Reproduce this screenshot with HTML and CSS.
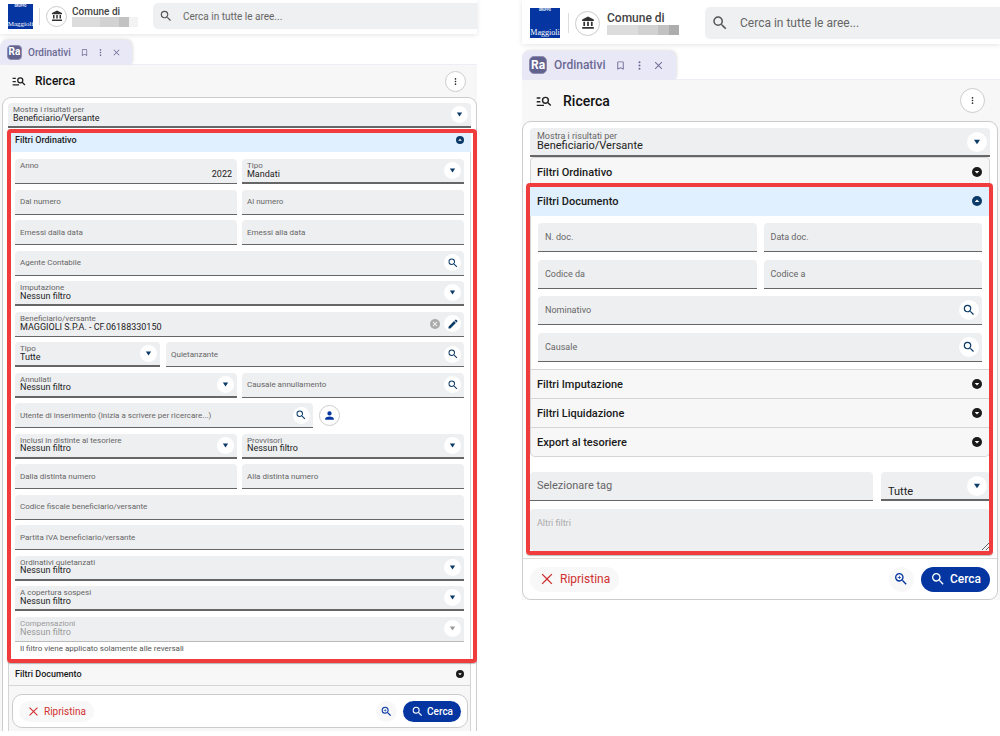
FILE: index.html
```html
<!DOCTYPE html>
<html lang="it">
<head>
<meta charset="utf-8">
<meta name="viewport" content="width=device-width, initial-scale=1">
<title>Ordinativi - Ricerca</title>
<link rel="stylesheet" href="styles.css">
</head>
<body>
<svg class="sprite" aria-hidden="true">
  <symbol id="search" viewBox="0 0 24 24"><path d="M15.5 14h-.79l-.28-.27A6.47 6.47 0 0 0 16 9.5 6.5 6.5 0 1 0 9.5 16c1.61 0 3.09-.59 4.23-1.57l.27.28v.79l5 4.99L20.49 19l-4.99-5zm-6 0C7.01 14 5 11.99 5 9.5S7.01 5 9.5 5 14 7.01 14 9.5 11.99 14 9.5 14z"/></symbol>
  <symbol id="zoom-in" viewBox="0 0 24 24"><path d="M15.5 14h-.79l-.28-.27A6.47 6.47 0 0 0 16 9.5 6.5 6.5 0 1 0 9.5 16c1.61 0 3.09-.59 4.23-1.57l.27.28v.79l5 4.99L20.49 19l-4.99-5zm-6 0C7.01 14 5 11.99 5 9.5S7.01 5 9.5 5 14 7.01 14 9.5 11.99 14 9.5 14zM12 10h-2v2H9v-2H7V9h2V7h1v2h2v1z"/></symbol>
  <symbol id="manage" viewBox="1 3 22 18"><path d="M7 9H2V7h5v2zm0 3H2v2h5v-2zm13.59 7-3.83-3.83A4.92 4.92 0 0 1 14 16a5 5 0 1 1 5-5c0 1.020-.31 1.960-.83 2.750L22 17.590 20.590 19zM17 11a3 3 0 1 0-6 0 3 3 0 0 0 6 0zM2 19h10v-2H2v2z"/></symbol>
  <symbol id="bank" viewBox="0 0 24 24"><path d="M4 10v7h3v-7H4zm6.500 0v7h3v-7h-3zM2 22h20v-3H2v3zm15-12v7h3v-7h-3zM12 1 2 6v2.500h20V6L12 1z"/></symbol>
  <symbol id="bookmark" viewBox="0 0 24 24"><path d="M17 3H7a2 2 0 0 0-2 2v16l7-3 7 3V5a2 2 0 0 0-2-2zm0 15-5-2.180L7 18V5h10v13z"/></symbol>
  <symbol id="more" viewBox="0 0 24 24"><circle cx="12" cy="5" r="2.200"/><circle cx="12" cy="12" r="2.200"/><circle cx="12" cy="19" r="2.200"/></symbol>
  <symbol id="close" viewBox="0 0 24 24"><path d="M20 5.400 18.600 4 12 10.600 5.400 4 4 5.400 10.600 12 4 18.600 5.400 20 12 13.400 18.600 20 20 18.600 13.400 12z"/></symbol>
  <symbol id="arrow" viewBox="0 0 24 24"><path d="M3 5h18l-9 14z"/></symbol>
  <symbol id="open" viewBox="0 0 24 24"><circle cx="12" cy="12" r="12"/><path d="M6.500 9.500h11L12 15.500z" fill="#fff"/></symbol>
  <symbol id="shut" viewBox="0 0 24 24"><circle cx="12" cy="12" r="12"/><path d="M6.500 14.500h11L12 8.500z" fill="#fff"/></symbol>
  <symbol id="clear" viewBox="0 0 24 24"><circle cx="12" cy="12" r="12"/><path d="m7 7 10 10M17 7 7 17" stroke="#eeeff1" stroke-width="2.500"/></symbol>
  <symbol id="edit" viewBox="0 0 24 24"><path d="M3 17.250V21h3.750L17.810 9.940l-3.750-3.750L3 17.250zM20.710 7.040a1 1 0 0 0 0-1.410l-2.340-2.340a1 1 0 0 0-1.410 0l-1.830 1.830 3.750 3.750 1.830-1.830z"/></symbol>
  <symbol id="person" viewBox="0 0 24 24"><path d="M12 12a4 4 0 1 0 0-8 4 4 0 0 0 0 8zm0 2c-2.670 0-8 1.340-8 4v2h16v-2c0-2.660-5.330-4-8-4z"/></symbol>
</svg>

<main class="screens">
  <section class="panel compact">
    <header class="top">
      <span class="logo"><small>GRUPPO</small><b>Maggioli</b></span>
      <span class="divider"></span>
      <span class="round bank"><svg><use href="#bank"/></svg></span>
      <div class="entity"><span>Comune di</span><span class="masked"><i></i><i></i><i></i><i></i></span></div>
      <label class="global"><svg><use href="#search"/></svg><input type="search" aria-label="Cerca" placeholder="Cerca in tutte le aree..."></label>
    </header>
    <nav class="tabs">
      <div class="tab">
        <span class="ra">Ra</span><a href="#ordinativi">Ordinativi</a>
        <button type="button" aria-label="Segnalibro"><svg><use href="#bookmark"/></svg></button>
        <button type="button" aria-label="Menu scheda"><svg><use href="#more"/></svg></button>
        <button type="button" aria-label="Chiudi"><svg><use href="#close"/></svg></button>
      </div>
    </nav>
    <div class="content">
      <div class="heading">
        <svg class="manage"><use href="#manage"/></svg><h1>Ricerca</h1>
        <button class="round" type="button" aria-label="Altre azioni"><svg><use href="#more"/></svg></button>
      </div>
      <form class="card">
        <div class="field pick"><label for="a0">Mostra i risultati per</label><select id="a0"><option>Beneficiario/Versante</option></select><span class="knob"><svg><use href="#arrow"/></svg></span></div>
        <div class="accordion">
          <div class="marked">
            <button class="bar active" type="button" aria-expanded="true">Filtri Ordinativo<svg><use href="#shut"/></svg></button>
            <div class="body">
              <div class="rows">
                <div class="pair">
                  <div class="field number"><label for="a1">Anno</label><input id="a1" value="2022"></div>
                  <div class="field pick"><label for="a2">Tipo</label><select id="a2"><option>Mandati</option></select><span class="knob"><svg><use href="#arrow"/></svg></span></div>
                </div>
                <div class="pair">
                  <div class="field empty"><label for="a3">Dal numero</label><input id="a3"></div>
                  <div class="field empty"><label for="a4">Al numero</label><input id="a4"></div>
                </div>
                <div class="pair">
                  <div class="field empty"><label for="a5">Emessi dalla data</label><input id="a5"></div>
                  <div class="field empty"><label for="a6">Emessi alla data</label><input id="a6"></div>
                </div>
                <div class="field empty"><label for="a7">Agente Contabile</label><input id="a7"><button class="knob" type="button" aria-label="Cerca agente"><svg><use href="#search"/></svg></button></div>
                <div class="field pick"><label for="a8">Imputazione</label><select id="a8"><option>Nessun filtro</option></select><span class="knob"><svg><use href="#arrow"/></svg></span></div>
                <div class="field"><label for="a9">Beneficiario/versante</label><input id="a9" value="MAGGIOLI S.P.A. - CF.06188330150">
                  <span class="tools"><button class="clear" type="button" aria-label="Cancella"><svg><use href="#clear"/></svg></button><button class="knob" type="button" aria-label="Modifica"><svg><use href="#edit"/></svg></button></span></div>
                <div class="pair third">
                  <div class="field pick"><label for="a10">Tipo</label><select id="a10"><option>Tutte</option></select><span class="knob"><svg><use href="#arrow"/></svg></span></div>
                  <div class="field empty"><label for="a11">Quietanzante</label><input id="a11"><button class="knob" type="button" aria-label="Cerca quietanzante"><svg><use href="#search"/></svg></button></div>
                </div>
                <div class="pair">
                  <div class="field pick"><label for="a12">Annullati</label><select id="a12"><option>Nessun filtro</option></select><span class="knob"><svg><use href="#arrow"/></svg></span></div>
                  <div class="field empty"><label for="a13">Causale annullamento</label><input id="a13"><button class="knob" type="button" aria-label="Cerca causale"><svg><use href="#search"/></svg></button></div>
                </div>
                <div class="pair user">
                  <div class="field empty"><label for="a14">Utente di inserimento (Inizia a scrivere per ricercare...)</label><input id="a14"><button class="knob" type="button" aria-label="Cerca utente"><svg><use href="#search"/></svg></button></div>
                  <button class="round person" type="button" aria-label="Utente corrente"><svg><use href="#person"/></svg></button>
                </div>
                <div class="pair">
                  <div class="field pick"><label for="a15">Inclusi in distinte al tesoriere</label><select id="a15"><option>Nessun filtro</option></select><span class="knob"><svg><use href="#arrow"/></svg></span></div>
                  <div class="field pick"><label for="a16">Provvisori</label><select id="a16"><option>Nessun filtro</option></select><span class="knob"><svg><use href="#arrow"/></svg></span></div>
                </div>
                <div class="pair">
                  <div class="field empty"><label for="a17">Dalla distinta numero</label><input id="a17"></div>
                  <div class="field empty"><label for="a18">Alla distinta numero</label><input id="a18"></div>
                </div>
                <div class="field empty"><label for="a19">Codice fiscale beneficiario/versante</label><input id="a19"></div>
                <div class="field empty"><label for="a20">Partita IVA beneficiario/versante</label><input id="a20"></div>
                <div class="field pick"><label for="a21">Ordinativi quietanzati</label><select id="a21"><option>Nessun filtro</option></select><span class="knob"><svg><use href="#arrow"/></svg></span></div>
                <div class="field pick"><label for="a22">A copertura sospesi</label><select id="a22"><option>Nessun filtro</option></select><span class="knob"><svg><use href="#arrow"/></svg></span></div>
                <div class="field pick off"><label for="a23">Compensazioni</label><select id="a23" disabled><option>Nessun filtro</option></select><span class="knob"><svg><use href="#arrow"/></svg></span></div>
              </div>
              <p class="hint">Il filtro viene applicato solamente alle reversali</p>
            </div>
          </div>
          <button class="bar" type="button" aria-expanded="false">Filtri Documento<svg><use href="#open"/></svg></button>
          <div class="underlay">
            <div class="actions">
              <button class="reset" type="button"><svg><use href="#close"/></svg>Ripristina</button>
              <button class="zoom" type="button" aria-label="Ricerca avanzata"><svg><use href="#zoom-in"/></svg></button>
              <button class="submit" type="button"><svg><use href="#search"/></svg>Cerca</button>
            </div>
          </div>
        </div>
      </form>
    </div>
  </section>

  <section class="panel roomy">
    <header class="top">
      <span class="logo"><small>GRUPPO</small><b>Maggioli</b></span>
      <span class="divider"></span>
      <span class="round bank"><svg><use href="#bank"/></svg></span>
      <div class="entity"><span>Comune di</span><span class="masked"><i></i><i></i><i></i><i></i></span></div>
      <label class="global"><svg><use href="#search"/></svg><input type="search" aria-label="Cerca" placeholder="Cerca in tutte le aree..."></label>
    </header>
    <nav class="tabs">
      <div class="tab">
        <span class="ra">Ra</span><a href="#ordinativi">Ordinativi</a>
        <button type="button" aria-label="Segnalibro"><svg><use href="#bookmark"/></svg></button>
        <button type="button" aria-label="Menu scheda"><svg><use href="#more"/></svg></button>
        <button type="button" aria-label="Chiudi"><svg><use href="#close"/></svg></button>
      </div>
    </nav>
    <div class="content">
      <div class="heading">
        <svg class="manage"><use href="#manage"/></svg><h1>Ricerca</h1>
        <button class="round" type="button" aria-label="Altre azioni"><svg><use href="#more"/></svg></button>
      </div>
      <form class="card">
        <div class="field pick"><label for="b0">Mostra i risultati per</label><select id="b0"><option>Beneficiario/Versante</option></select><span class="knob"><svg><use href="#arrow"/></svg></span></div>
        <div class="accordion">
          <button class="bar first" type="button" aria-expanded="false">Filtri Ordinativo<svg><use href="#open"/></svg></button>
          <div class="marked">
            <button class="bar active" type="button" aria-expanded="true">Filtri Documento<svg><use href="#shut"/></svg></button>
            <div class="body">
              <div class="rows">
                <div class="pair">
                  <div class="field empty"><label for="b1">N. doc.</label><input id="b1"></div>
                  <div class="field empty"><label for="b2">Data doc.</label><input id="b2"></div>
                </div>
                <div class="pair">
                  <div class="field empty"><label for="b3">Codice da</label><input id="b3"></div>
                  <div class="field empty"><label for="b4">Codice a</label><input id="b4"></div>
                </div>
                <div class="field empty"><label for="b5">Nominativo</label><input id="b5"><button class="knob" type="button" aria-label="Cerca nominativo"><svg><use href="#search"/></svg></button></div>
                <div class="field empty"><label for="b6">Causale</label><input id="b6"><button class="knob" type="button" aria-label="Cerca causale"><svg><use href="#search"/></svg></button></div>
              </div>
            </div>
            <button class="bar" type="button" aria-expanded="false">Filtri Imputazione<svg><use href="#open"/></svg></button>
            <button class="bar" type="button" aria-expanded="false">Filtri Liquidazione<svg><use href="#open"/></svg></button>
            <button class="bar last" type="button" aria-expanded="false">Export al tesoriere<svg><use href="#open"/></svg></button>
            <div class="tags">
              <div class="field empty big"><label for="b7">Selezionare tag</label><input id="b7"></div>
              <div class="field pick low"><select id="b8" aria-label="Tipo di tag"><option>Tutte</option></select><span class="knob"><svg><use href="#arrow"/></svg></span></div>
            </div>
            <textarea class="other" aria-label="Altri filtri" placeholder="Altri filtri"></textarea>
          </div>
        </div>
        <div class="actions">
          <button class="reset" type="button"><svg><use href="#close"/></svg>Ripristina</button>
          <button class="zoom" type="button" aria-label="Ricerca avanzata"><svg><use href="#zoom-in"/></svg></button>
          <button class="submit" type="button"><svg><use href="#search"/></svg>Cerca</button>
        </div>
      </form>
    </div>
  </section>
</main>
</body>
</html>
```

FILE: styles.css
```css
* { box-sizing: border-box; }
body { margin: 0; background: #fff; color: #222; font-family: Roboto, "Liberation Sans", sans-serif; }
button, input, select, textarea { font: inherit; color: inherit; margin: 0; padding: 0; border: 0; background: none; border-radius: 0; outline: 0; min-width: 0; }
button { cursor: pointer; }
svg { display: block; fill: currentColor; flex: none; }
.sprite { position: absolute; width: 0; height: 0; }

.screens { display: grid; grid-template-columns: minmax(0, 477fr) minmax(0, 478fr); gap: 45px; align-items: start; }

.compact {
  --label: 8px; --value: 9px; --bar: 9px; --title: 12px; --ui: 10px; --search: 10px;
  --field: 25px; --bar-h: 23px; --knob: 17px; --inset: 6px; --icon: 12px; --arrow: 7px;
  --pad: 5px; --label-top: 2px; --value-top: 6px; --round: 21px; --gap: 5px; --dot: 8px;
}
.roomy {
  --label: 9px; --value: 11px; --bar: 11px; --title: 14px; --ui: 12px; --search: 12px;
  --field: 29px; --bar-h: 29px; --knob: 20px; --inset: 7px; --icon: 14px; --arrow: 8px;
  --pad: 7px; --label-top: 2px; --value-top: 8px; --round: 25px; --gap: 7px; --dot: 10px;
}

/* Application header */
.top { display: flex; align-items: center; height: 34px; padding: 0 0 2px 8px; box-shadow: 0 1px 5px #0000001c; }
.roomy .top { height: 44px; padding: 2px 0 0 8px; }
.logo { display: flex; flex: none; flex-direction: column; align-items: center; justify-content: space-between; width: 25px; height: 25px; background: #0435a0; color: #fff; }
.logo small { font-size: 3px; font-weight: 700; line-height: 5px; }
.logo b { font-family: "Liberation Serif", serif; font-size: 7px; font-weight: 400; line-height: 9px; }
.roomy .logo { width: 30px; height: 30px; }
.roomy .logo b { font-size: 8px; line-height: 10px; }
.divider { width: 1px; height: 17px; margin: 0 6px; background: #ddd; }
.roomy .divider { height: 20px; margin: 0 6px 0 8px; }
.round { display: grid; place-items: center; flex: none; width: var(--round); height: var(--round); border: 1px solid #ccc; border-radius: 50%; background: #fff; }
.round svg { width: 9px; height: 9px; }
.bank svg { width: 12px; height: 12px; color: #333; }
.roomy .bank svg { width: 14px; height: 14px; }
.entity { display: flex; flex-direction: column; width: 66px; margin-left: 5px; font-size: var(--ui); font-weight: 500; line-height: 11px; color: #444; }
.roomy .entity { width: 72px; margin-left: 7px; line-height: 14px; }
.masked { display: grid; grid-template-columns: 3fr 2fr 1fr 1fr; height: 10px; }
.masked i:nth-child(1) { background: #dcdcdc; }
.masked i:nth-child(2) { background: #d2d2d2; }
.masked i:nth-child(3) { background: #c2c2c2; }
.masked i:nth-child(4) { background: #f3f3f3; }
.roomy .masked i:nth-child(4) { background: #adadad; }
.global { display: flex; align-items: center; flex: 1; height: 26px; margin-left: 15px; padding-left: 6px; gap: 10px; border-radius: 5px 0 0 5px; background: #eff0f1; color: #555; }
.roomy .global { height: 32px; margin-left: 26px; padding-left: 6px; gap: 11px; }
.global svg { width: 14px; height: 14px; }
.roomy .global svg { width: 18px; height: 18px; }
.global input { flex: 1; font-size: var(--search); }
.global input::placeholder { color: #666; opacity: 1; }

/* Tabs */
.tabs { display: flex; align-items: end; height: 30px; }
.roomy .tabs { height: 35px; }
.tab { display: flex; align-items: center; gap: 7px; height: 24px; padding: 0 11px 0 7px; border-radius: 7px 7px 0 0; background: #e9e8f6; color: #6b6a94; box-shadow: 1px -1px 3px #0000001f; }
.tab a { margin-right: 2px; color: inherit; font-size: var(--ui); font-weight: 500; text-decoration: none; }
.ra { display: grid; place-items: center; width: 15px; height: 15px; margin-right: -1px; border: 1px solid #8d8cb0; border-radius: 4px; background: #62628f; color: #fff; font-size: 10px; font-weight: 700; line-height: 12px; }
.roomy .ra { width: 18px; height: 18px; font-size: 12px; line-height: 15px; border-radius: 5px; }
.tab button svg { width: 9px; height: 9px; }
.roomy .tab { gap: 8px; height: 28px; padding-right: 12px; }
.roomy .tab button svg { width: 11px; height: 11px; }

/* Search panel */
.content { border-top: 1px solid #ededf7; background: #f7f7f7; padding: 0 0 0 2px; }
.roomy .content { padding: 0 2px 0 0; }
.heading { display: flex; align-items: center; height: 32px; padding: 0 11px 0 10px; }
.roomy .heading { height: 41px; padding: 0 13px 0 14px; }
.heading h1 { flex: 1; margin: 0 0 0 9px; font-size: var(--title); font-weight: 500; color: #111; }
.roomy .heading h1 { margin-left: 11px; }
.manage { width: 14px; height: 12px; }
.roomy .manage { width: 16px; height: 14px; }
.card { border: 1px solid #ccc; border-radius: 9px; background: #fff; }
.compact .card { padding: 5px 5px 0; border-bottom: 0; border-radius: 9px 9px 0 0; }
.roomy .card > .field, .roomy .accordion { margin: 0 7px; }
.roomy .card { padding-top: 6px; }

.field { display: grid; min-width: 0; height: var(--field); border-bottom: 1px solid #666; border-radius: 4px 4px 0 0; background: #eeeff1; }
.field > * { grid-area: 1 / 1; }
.field label { align-self: start; justify-self: start; z-index: 1; padding: var(--label-top) 0 0 var(--pad); font-size: var(--label); line-height: 9px; color: #666; white-space: nowrap; pointer-events: none; }
.roomy .field label { line-height: 12px; }
.field.empty label { align-self: center; padding-top: 0; }
.field.big label { font-size: 11px; }
.field input, .field select { width: 100%; height: 100%; padding: var(--value-top) var(--pad) 0; font-size: var(--value); appearance: none; }
.field.low select { padding-top: 11px; }
.field.pick { border-bottom: 2px solid #666; }
.number input { text-align: right; }
.knob { display: grid; place-items: center; align-self: center; justify-self: end; width: var(--knob); height: var(--knob); margin-right: 3px; border-radius: 50%; background: #fff; color: #0b3a66; }
.field .knob svg { width: var(--icon); height: var(--icon); }
.field.pick .knob { pointer-events: none; }
.field.pick .knob svg { width: var(--arrow); height: var(--arrow); }
.tools { display: flex; align-items: center; justify-self: end; gap: 4px; }
.clear { color: #aaa; }
.clear svg { width: 10px; height: 10px; }
.field.off { border-bottom: 1px solid #bbb; }
.field.off label, .field.off select, .field.off .knob { color: #999; opacity: 1; }

.accordion { margin-top: 1px; }
.bar { display: flex; align-items: center; justify-content: space-between; width: 100%; height: var(--bar-h); padding: 0 6px; border: 1px solid #d5d5d5; border-top: 0; background: #f7f7f7; font-size: var(--bar); font-weight: 500; color: #1a1a1a; }
.roomy .bar { padding: 0 7px 0 6px; }
.bar svg { width: var(--dot); height: var(--dot); }
.roomy .bar.first { height: 30px; border-top: 1px solid #d5d5d5; border-radius: 4px 4px 0 0; }
.bar.last { border-radius: 0 0 5px 5px; }
.bar.active { border-color: #e0f0ff; background: #e0f0ff; }
.bar.active svg { color: #0b3a66; }
.body { border: 1px solid #d5d5d5; border-top: 0; padding: 7px var(--inset); }
.compact .body { padding-bottom: 6px; }
.roomy .body { padding: 7px; }
.rows { display: flex; flex-direction: column; justify-content: space-between; min-height: 483px; }
.roomy .rows { min-height: 139px; }
.pair { display: grid; grid-template-columns: repeat(2, minmax(0, 1fr)); gap: var(--gap); }
.pair.third { grid-template-columns: minmax(0, 145fr) minmax(0, 298fr); gap: 6px; }
.pair.user { grid-template-columns: minmax(0, 297fr) minmax(0, 145fr); gap: 6px; align-items: center; }
.person { color: #0435a0; }
.person svg { width: 13px; height: 13px; }
.hint { margin: 0; padding: 2px 5px; font-size: var(--label); line-height: 10px; color: #555; }

/* Highlight frame drawn over the section */
.marked { position: relative; }
.marked::after { content: ""; position: absolute; inset: 0 -6px 0 -1px; border: 4px solid #f03c3c; border-radius: 4px; box-shadow: 0 1px 1px #0004; pointer-events: none; }
.roomy .marked::after { inset: -4px -3px -4px -4px; }

.tags { display: grid; grid-template-columns: minmax(0, 343fr) minmax(0, 109fr); gap: 8px; padding: 15px 0 8px; }
.other { display: block; width: 100%; height: 42px; padding: 8px 7px; border-radius: 4px; background: #eeeff1; font-size: var(--label); line-height: 12px; resize: vertical; }
.other::placeholder { color: #aaa; opacity: 1; }

/* Footer actions */
.actions { display: flex; align-items: center; background: #fff; }
.compact .actions { margin: 0 2px 0 3px; height: 34px; padding: 0 6px; border: 1px solid #ccc; border-radius: 10px; }
.underlay { padding: 8px 0 3px; border: 1px solid #d5d5d5; border-width: 0 1px; background: #f7f7f7; }
.roomy .actions { height: 41px; margin-top: 7px; padding: 0 7px; border-top: 1px solid #ddd; border-radius: 0 0 9px 9px; }
.actions button { display: flex; align-items: center; justify-content: center; height: 21px; border-radius: 13px; font-size: var(--ui); }
.roomy .actions button { height: 25px; }
.actions svg { width: 13px; height: 13px; }
.roomy .actions svg { width: 16px; height: 16px; }
.actions .reset { gap: 4px; margin-right: auto; padding: 0 8px; background: #f8f8f8; color: #d02f2f; }
.roomy .actions .reset { gap: 5px; padding: 0 9px; }
.actions .zoom { width: 21px; margin-right: 6px; background: #f8f8f8; color: #0435a0; }
.roomy .actions .zoom { width: 25px; margin-right: 7px; }
.actions .submit { gap: 3px; padding: 0 8px; background: #0435a0; color: #fff; font-weight: 500; }
.roomy .actions .submit { gap: 4px; padding: 0 9px; }
```
